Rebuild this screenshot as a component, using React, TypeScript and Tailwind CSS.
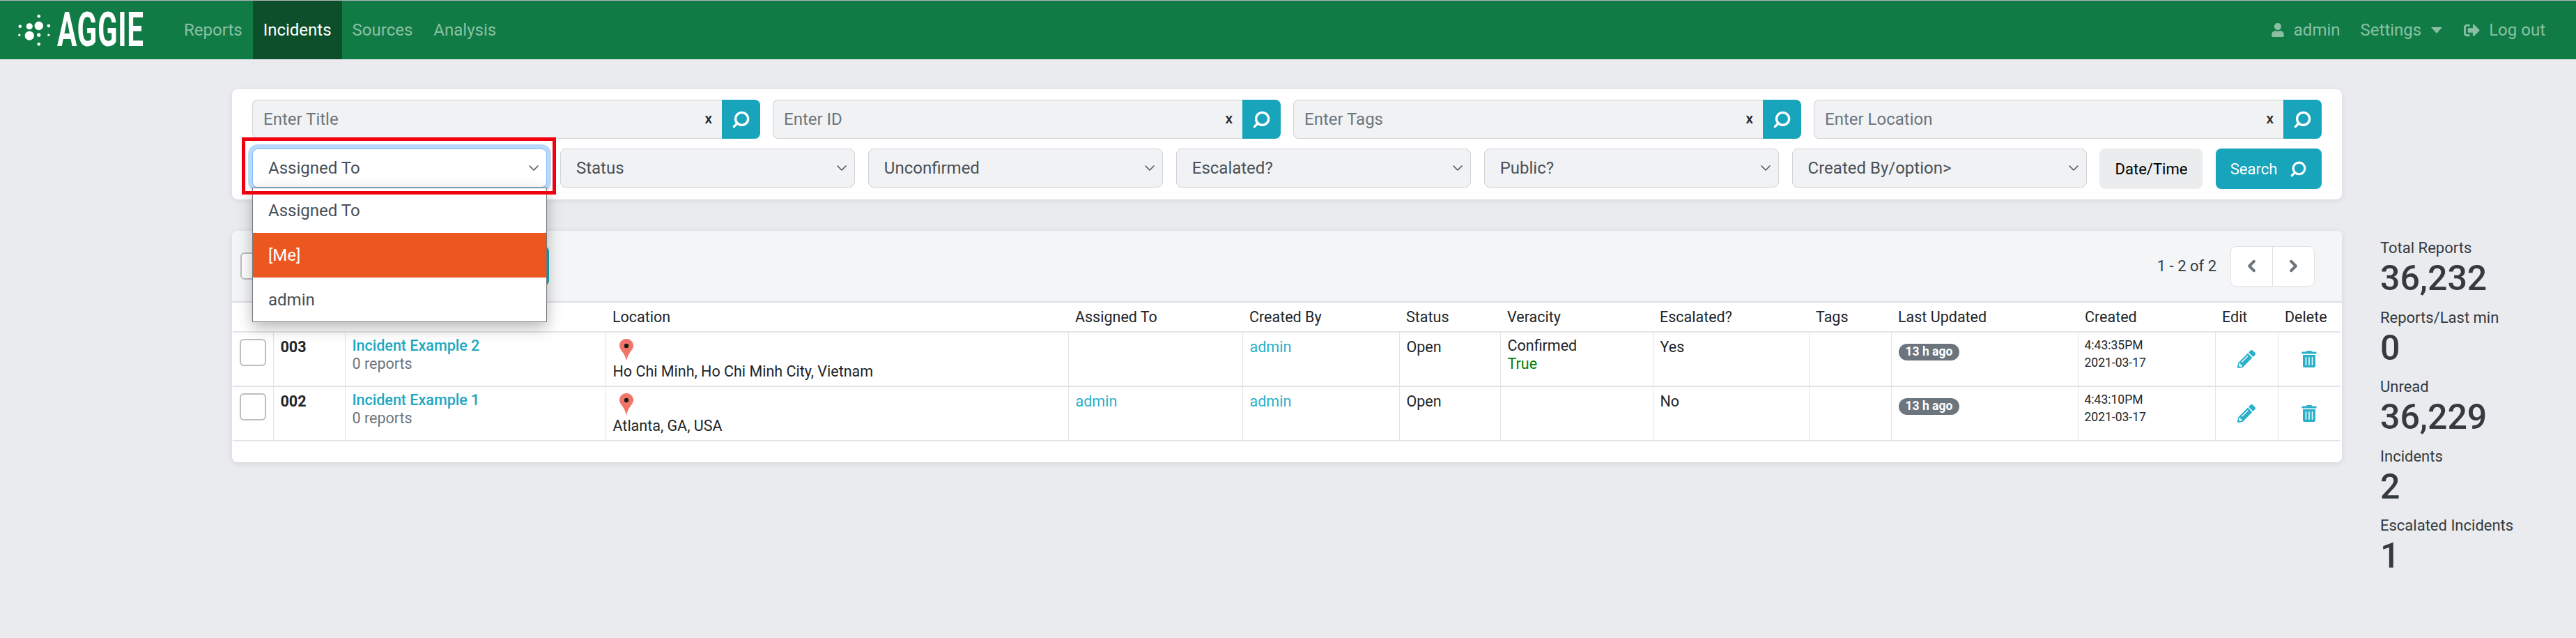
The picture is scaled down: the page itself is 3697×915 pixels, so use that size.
/* Aggie incidents page, Assigned To filter open */

import { ChevronDown, ChevronLeft, ChevronRight, Search } from 'lucide-react'
import { FaPencilAlt, FaSignOutAlt, FaTrashAlt, FaUser } from 'react-icons/fa'

const colWidths = ['w-[58px]', 'w-[103px]', 'w-[374px]', 'w-[664px]', 'w-[250px]', 'w-[225px]', 'w-[145px]', 'w-[219px]', 'w-[224px]', 'w-[118px]', 'w-[268px]', 'w-[197px]', 'w-[90px]', 'w-[90px]']
const headers = ['', '', '', 'Location', 'Assigned To', 'Created By', 'Status', 'Veracity', 'Escalated?', 'Tags', 'Last Updated', 'Created', 'Edit', 'Delete']

const rows = [
  { id: '003', title: 'Incident Example 2', location: 'Ho Chi Minh, Ho Chi Minh City, Vietnam', assigned: '', veracity: 'Confirmed', truth: 'True', escalated: 'Yes', time: '4:43:35PM' },
  { id: '002', title: 'Incident Example 1', location: 'Atlanta, GA, USA', assigned: 'admin', veracity: '', truth: '', escalated: 'No', time: '4:43:10PM' },
]

const stats = [
  ['Total Reports', '36,232'],
  ['Reports/Last min', '0'],
  ['Unread', '36,229'],
  ['Incidents', '2'],
  ['Escalated Incidents', '1'],
]

function Logo() {
  const dots = [[123, 50, 7], [41, 94, 7], [82, 94, 14], [123, 92, 19], [166, 92, 7], [38, 132, 5], [82, 135, 20], [123, 132, 8], [166, 132, 5], [123, 172, 7]]
  return (
    <div className="flex items-center w-[238px] pl-[25px] shrink-0">
      <svg viewBox="30 40 145 140" className="w-[48px] h-[46px] shrink-0">
        {dots.map(([x, y, r]) => <circle key={`${x}-${y}`} cx={x} cy={y} r={r} fill="#fff" />)}
      </svg>
      <span className="ml-[9px] text-[68px] leading-none font-bold text-white tracking-[1px] origin-left scale-x-[0.62] font-[family-name:Roboto,sans-serif]">AGGIE</span>
    </div>
  )
}

function NavItem({ label, active }: { label: string; active?: boolean }) {
  return (
    <div className={active ? 'h-full flex items-center px-[15px] bg-[#0c4f2a] text-white' : 'h-full flex items-center px-[15px] text-[#89c0a3]'}>
      {label}
    </div>
  )
}

function SearchInput({ placeholder }: { placeholder: string }) {
  return (
    <div className="flex h-[56px]">
      <div className="relative flex-1">
        <input
          placeholder={placeholder}
          className="w-full h-full pl-[15px] pr-[40px] bg-[#f1f2f4] border border-[#d0d3d9] border-r-0 rounded-l-[8px] text-[24px] placeholder:text-[#6c757d] outline-none"
        />
        <span className="absolute right-[14px] top-[12px] text-[21px] font-medium text-[#212529]">x</span>
      </div>
      <div className="w-[55px] bg-[#18a4bb] rounded-r-[8px] flex items-center justify-center text-white">
        <Search size={27} strokeWidth={3} className="-scale-x-100" />
      </div>
    </div>
  )
}

function FilterSelect({ label }: { label: string }) {
  return (
    <div className="h-[56px] flex items-center justify-between pl-[22px] pr-[6px] bg-[#f1f2f4] border border-[#d0d3d9] rounded-[8px] text-[24px] text-[#495057]">
      <span>{label}</span>
      <ChevronDown size={24} strokeWidth={1.5} />
    </div>
  )
}

function AssignedFilter() {
  return (
    <div className="relative z-10 h-[56px]">
      <div className="h-full flex items-center justify-between pl-[22px] pr-[6px] bg-white border border-[#80bdff] rounded-[8px] ring-[6px] ring-[#b9d9fb] text-[24px] text-[#495057]">
        <span>Assigned To</span>
        <ChevronDown size={24} strokeWidth={1.5} />
      </div>
      <div className="absolute left-0 right-0 top-full bg-white border border-[#767676] shadow-[0_8px_20px_rgba(0,0,0,0.28)] text-[24px] text-[#495057]">
        <div className="h-[64px] flex items-center pl-[22px]">Assigned To</div>
        <div className="h-[64px] flex items-center pl-[22px] bg-[#ec5720] text-white">[Me]</div>
        <div className="h-[63px] flex items-center pl-[22px]">admin</div>
      </div>
      <div className="absolute -left-[15px] -right-[13px] -top-[16px] -bottom-[10px] border-[5px] border-[#f0000f] pointer-events-none" />
    </div>
  )
}

function Pin() {
  return (
    <svg viewBox="0 0 20 32" className="w-[20px] h-[32px] block">
      <path d="M10 0C4 0 0 4.5 0 10c0 6 8 10 10 22 2-12 10-16 10-22C20 4.5 16 0 10 0Z" fill="#f1746a" />
      <circle cx="10" cy="10" r="3.2" fill="#1a1a1a" />
    </svg>
  )
}

function Checkbox() {
  return <div className="w-[38px] h-[39px] bg-white border-2 border-[#bdbdbd] rounded-[6px]" />
}

export default function App() {
  return (
    <div className="min-h-[915px] bg-[#e9ebef] text-[#212529] font-[family-name:Roboto,sans-serif] overflow-hidden">
      {/* 顶部导航 */}
      <nav className="h-[85px] border-t border-[#b5b5b5] bg-[#117b46] flex items-center text-[24px]">
        <Logo />
        <div className="h-full flex items-center ml-[11px]">
          <NavItem label="Reports" />
          <NavItem label="Incidents" active />
          <NavItem label="Sources" />
          <NavItem label="Analysis" />
        </div>
        <div className="ml-auto flex items-center pr-[44px] text-[#89c0a3]">
          <FaUser size={20} />
          <span className="ml-[13px]">admin</span>
          <span className="ml-[29px]">Settings</span>
          <span className="ml-[14px] w-0 h-0 border-x-[8px] border-x-transparent border-t-[9px] border-t-[#89c0a3]" />
          <FaSignOutAlt size={23} className="ml-[31px]" />
          <span className="ml-[13px]">Log out</span>
        </div>
      </nav>

      <div className="flex pt-[43px] pl-[333px]">
        <div className="w-[3028px] shrink-0">
          {/* 筛选 */}
          <div className="h-[158px] bg-white rounded-[8px] shadow-[0_2px_8px_rgba(0,0,0,0.08)] px-[29px] pt-[15px]">
            <div className="grid grid-cols-4 gap-x-[18px]">
              <SearchInput placeholder="Enter Title" />
              <SearchInput placeholder="Enter ID" />
              <SearchInput placeholder="Enter Tags" />
              <SearchInput placeholder="Enter Location" />
            </div>
            <div className="grid grid-cols-[repeat(6,1fr)_148px_152px] gap-x-[18.5px] mt-[14px] items-start">
              <AssignedFilter />
              <FilterSelect label="Status" />
              <FilterSelect label="Unconfirmed" />
              <FilterSelect label="Escalated?" />
              <FilterSelect label="Public?" />
              <FilterSelect label="Created By/option>" />
              <div className="h-[58px] flex items-center justify-center bg-[#ebecee] rounded-[8px] text-[22px] text-black">Date/Time</div>
              <div className="h-[58px] flex items-center justify-center gap-[18px] bg-[#18a4bb] rounded-[8px] text-[22px] text-white">
                Search
                <Search size={25} strokeWidth={3} className="-scale-x-100" />
              </div>
            </div>
          </div>

          {/* 结果列表 */}
          <div className="mt-[45px] h-[332px] bg-white rounded-[8px] shadow-[0_2px_8px_rgba(0,0,0,0.1)] overflow-hidden">
            <div className="h-[103px] bg-[#f4f5f7] border-b-2 border-[#dcdee2] flex items-center pl-[12px] pr-[39px]">
              <Checkbox />
              <div className="ml-[17px] w-[388px] h-[57px] bg-[#18a4bb] rounded-[8px]" />
              <span className="ml-auto text-[22px] text-[#343a40]">1 - 2 of 2</span>
              <div className="ml-[20px] flex w-[121px] h-[58px] bg-white border border-[#e0e2e6] rounded-[8px] text-[#6c757d]">
                <div className="w-1/2 flex items-center justify-center border-r border-[#e0e2e6]">
                  <ChevronLeft size={27} strokeWidth={3.5} />
                </div>
                <div className="w-1/2 flex items-center justify-center">
                  <ChevronRight size={27} strokeWidth={3.5} />
                </div>
              </div>
            </div>
            <table className="table-fixed border-collapse w-[3025px] ml-px text-[21.5px] leading-[32px]">
              <colgroup>
                {colWidths.map((w, i) => <col key={i} className={w} />)}
              </colgroup>
              <thead>
                <tr className="h-[42px] border-b-2 border-[#e2e4e8]">
                  {headers.map((h, i) => <th key={i} className="px-[10px] text-left font-normal align-middle">{h}</th>)}
                </tr>
              </thead>
              <tbody>
                {rows.map((r) => (
                  <tr key={r.id} className="h-[78px] border-b-2 border-[#e2e4e8]">
                    <td className="border-r border-[#e2e4e8] pl-[10px] align-top pt-[9px]"><Checkbox /></td>
                    <td className="border-r border-[#e2e4e8] px-[10px] align-top pt-[5px] font-bold">{r.id}</td>
                    <td className="border-r border-[#e2e4e8] px-[10px] align-top pt-[5px]">
                      <div className="font-medium text-[#1ea7c2] leading-[28px]">{r.title}</div>
                      <div className="text-[#6c757d] leading-[24px]">0 reports</div>
                    </td>
                    <td className="border-r border-[#e2e4e8] px-[10px] align-top pt-[9px]">
                      <div className="pl-[9px]"><Pin /></div>
                      <div className="leading-[30px]">{r.location}</div>
                    </td>
                    <td className="border-r border-[#e2e4e8] px-[10px] align-top pt-[5px] text-[#2bb0c9]">{r.assigned}</td>
                    <td className="border-r border-[#e2e4e8] px-[10px] align-top pt-[5px] text-[#2bb0c9]">admin</td>
                    <td className="border-r border-[#e2e4e8] px-[10px] align-top pt-[5px]">Open</td>
                    <td className="border-r border-[#e2e4e8] px-[10px] align-top pt-[5px]">
                      <div className="leading-[28px]">{r.veracity}</div>
                      <div className="text-[#008000] leading-[24px]">{r.truth}</div>
                    </td>
                    <td className="border-r border-[#e2e4e8] px-[10px] align-top pt-[5px]">{r.escalated}</td>
                    <td className="border-r border-[#e2e4e8] px-[10px] align-top pt-[5px]"></td>
                    <td className="border-r border-[#e2e4e8] px-[10px] align-top pt-[10px]">
                      <span className="inline-flex items-center h-[24px] px-[10px] rounded-full bg-[#6c757d] text-white text-[17.5px] font-bold leading-none">13 h ago</span>
                    </td>
                    <td className="border-r border-[#e2e4e8] px-[9px] align-top pt-[6px] text-[17.5px] leading-[25px]">
                      <div>{r.time}</div>
                      <div>2021-03-17</div>
                    </td>
                    <td className="border-r border-[#e2e4e8] align-middle">
                      <FaPencilAlt size={26} className="mx-auto text-[#2bb0c9]" />
                    </td>
                    <td className="align-middle">
                      <FaTrashAlt size={24} className="mx-auto text-[#2bb0c9]" />
                    </td>
                  </tr>
                ))}
              </tbody>
            </table>
          </div>
        </div>

        {/* 统计 */}
        <div className="ml-[55px] pt-[212px] flex flex-col text-[#343a40]">
          {stats.map(([label, value]) => (
            <div key={label} className="h-[99.5px]">
              <div className="text-[22px] leading-[32px]">{label}</div>
              <div className="text-[50px] leading-[50px] font-medium mt-[2px]">{value}</div>
            </div>
          ))}
        </div>
      </div>
    </div>
  )
}
